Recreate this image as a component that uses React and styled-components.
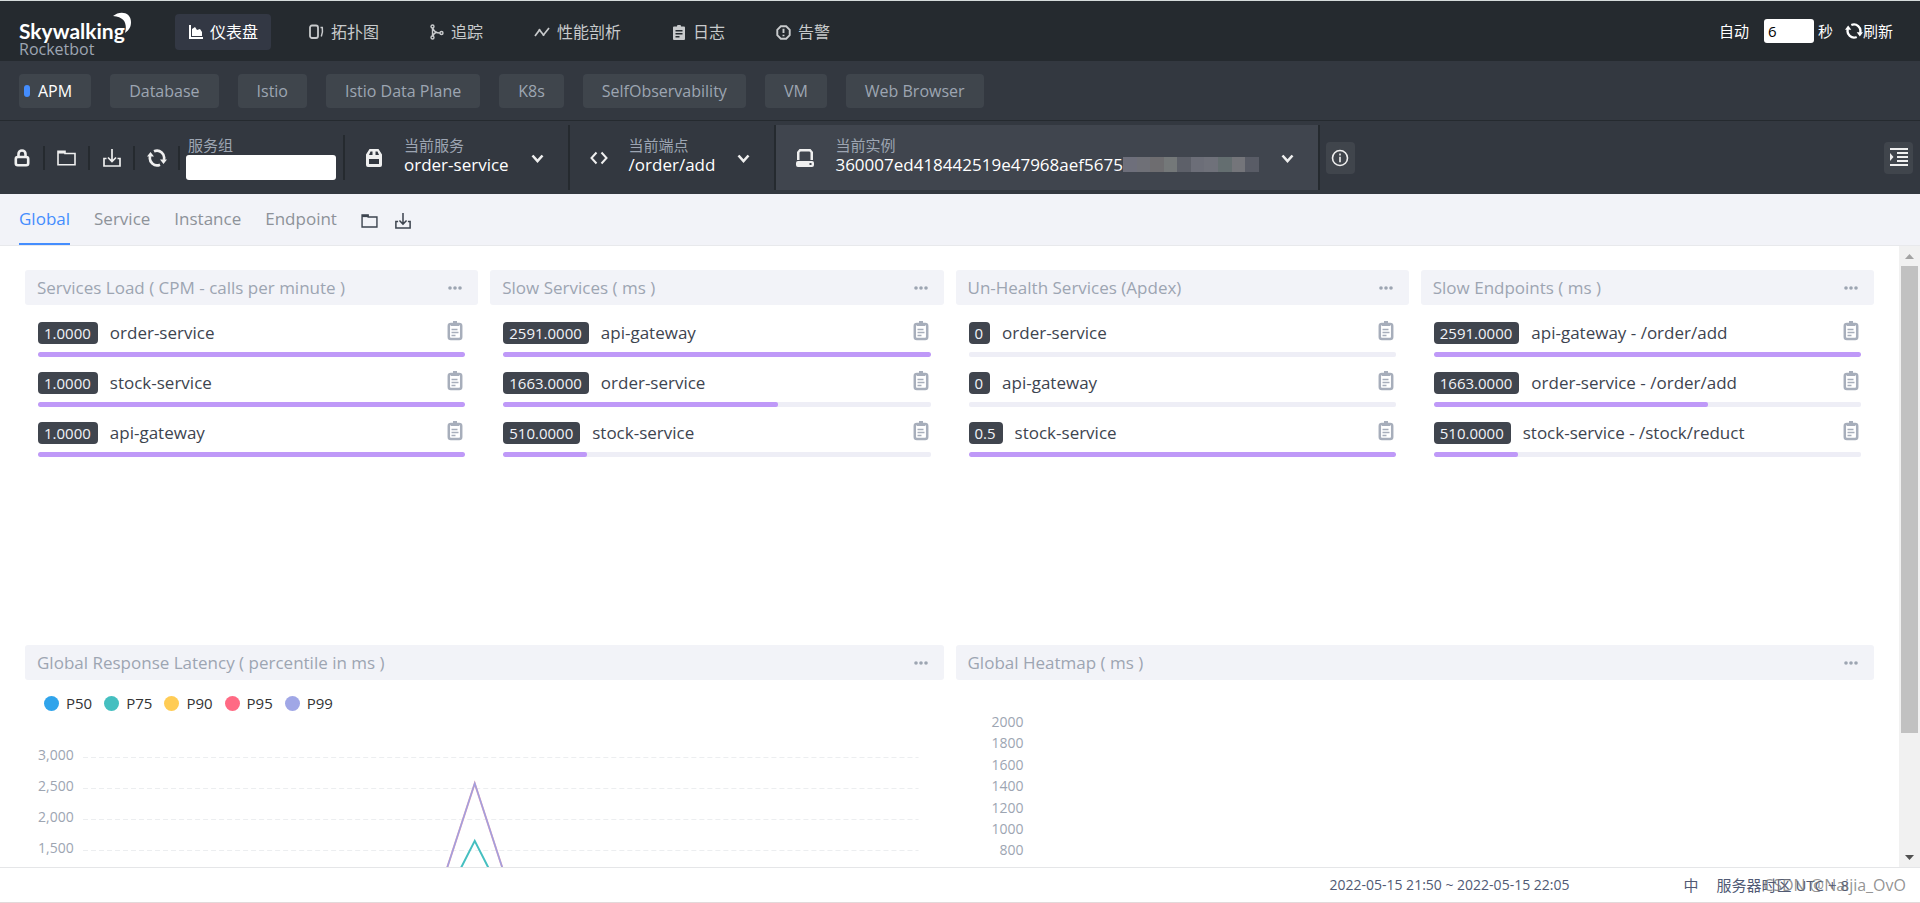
import React, { useState } from 'react';
import styled, { createGlobalStyle, css } from 'styled-components';

const GlobalStyle = createGlobalStyle`
  *, *::before, *::after {
    box-sizing: border-box;
  }

  body {
    margin: 0;
    background: #fff;
    color: #3d444f;
    font-family: 'Open Sans', 'Noto Sans CJK SC', sans-serif;
    font-size: 15px;
    line-height: 20px;
  }

  button, input {
    font: inherit;
    color: inherit;
  }

  button {
    padding: 0;
    border: 0;
    background: none;
    cursor: pointer;
  }

  a {
    color: inherit;
    text-decoration: none;
  }

  svg {
    display: block;
    flex: none;
  }
`;

const Page = styled.div`
  display: flex;
  flex-direction: column;
  height: 100vh;
  border-top: 1px solid #d5dbdb;
`;

/* header */

const Header = styled.header`
  display: flex;
  align-items: center;
  flex: none;
  height: 60px;
  padding: 0 27px 0 19px;
  background: #252a2f;
  color: #fff;
`;

const Brand = styled.a`
  position: relative;
  width: 156px;
  margin-top: 12px;
`;

const BrandName = styled.span`
  display: block;
  font-family: Lato, sans-serif;
  font-weight: 700;
  font-size: 21px;
  line-height: 24px;
`;

const BrandMoon = styled.svg`
  position: absolute;
  left: 94px;
  top: -7px;
`;

const BrandSub = styled.span`
  display: block;
  color: #9da5b2;
  font-size: 16px;
  line-height: 12px;
`;

const Nav = styled.nav`
  display: flex;
  gap: 24px;
  margin-top: 2px;
`;

const NavItem = styled.a`
  display: flex;
  align-items: center;
  gap: 7px;
  height: 36px;
  padding: 0 13px 0 14px;
  border-radius: 4px;
  font-size: 16px;
  color: ${({ $active }) => ($active ? '#fff' : '#c8cacc')};
  background: ${({ $active }) => ($active ? '#333844' : 'transparent')};
`;

const Reload = styled.div`
  display: flex;
  align-items: center;
  margin-left: auto;
`;

const ReloadInput = styled.input`
  width: 50px;
  height: 24px;
  margin: 0 4px 0 15px;
  padding: 0 4px;
  border: 0;
  border-radius: 3px;
  background: #fff;
  color: #000;
`;

const ReloadButton = styled.button`
  display: flex;
  align-items: center;
  margin-left: 12px;
`;

/* dashboard groups */

const Groups = styled.nav`
  display: flex;
  align-items: center;
  gap: 19px;
  flex: none;
  height: 60px;
  padding: 0 19px;
  background: #333840;
  border-bottom: 1px solid #252a2f;
`;

const Group = styled.a`
  position: relative;
  height: 34px;
  padding: 0 19px;
  border-radius: 4px;
  font-size: 16px;
  line-height: 34px;
  background: #3f454c;
  color: ${({ $active }) => ($active ? '#fff' : '#9da5b2')};

  ${({ $active }) =>
    $active &&
    css`
      &::before {
        content: '';
        position: absolute;
        left: 5px;
        top: 11px;
        width: 6px;
        height: 12px;
        border-radius: 3px;
        background: #448dfe;
      }
    `}
`;

/* selectors */

const Toolbar = styled.div`
  display: flex;
  align-items: center;
  flex: none;
  height: 73px;
  padding-right: 7px;
  background: #333840;
  color: #efefef;
`;

const Tool = styled.button`
  display: flex;
  align-items: center;
  justify-content: center;
  width: 45px;
  height: 24px;
  border-right: 2px solid #252a2f;
`;

const GroupFilter = styled.label`
  display: flex;
  flex-direction: column;
  padding: 0 7px 0 6px;
  color: #9da5b2;
  border-right: 2px solid #252a2f;
`;

const GroupName = styled.span`
  padding-left: 2px;
`;

const GroupInput = styled.input`
  width: 150px;
  height: 25px;
  padding: 0 6px;
  border: 0;
  border-radius: 3px;
  background: #fff;
  color: #000;
`;

const Selector = styled.button`
  display: flex;
  align-items: center;
  height: 65px;
  padding: 0 24px 0 20px;
  text-align: left;
  border-right: 2px solid #252a2f;
  background: ${({ $active }) => ($active ? '#40454e' : 'transparent')};
`;

const SelectorText = styled.span`
  padding: 0 22px 6px 21px;
`;

const SelectorLabel = styled.span`
  display: block;
  color: #9da5b2;
`;

const SelectorValue = styled.span`
  display: flex;
  align-items: center;
  font-size: 17px;
  color: #fff;
`;

const Mosaic = styled.span`
  display: flex;
  width: 136px;
`;

const MosaicCell = styled.span`
  flex: 1;
  height: 15px;
  background: ${({ $color }) => $color};
`;

const SquareButton = styled.button`
  display: flex;
  align-items: center;
  justify-content: center;
  width: 29px;
  height: 32px;
  margin-left: ${({ $end }) => ($end ? 'auto' : '6px')};
  border-radius: 4px;
  background: #40454c;
`;

/* tabs */

const Tabs = styled.nav`
  display: flex;
  gap: 24px;
  flex: none;
  height: 52px;
  padding: 0 19px;
  background: #f2f3f8;
  border-bottom: 1px solid #e8e9ec;
`;

const Tab = styled.a`
  height: 51px;
  font-size: 17px;
  line-height: 50px;
  color: ${({ $active }) => ($active ? '#448dfe' : '#8d9299')};
  border-bottom: 2px solid ${({ $active }) => ($active ? '#448dfe' : 'transparent')};
`;

const TabTools = styled.div`
  display: flex;
  align-items: center;
  gap: 17px;
  padding-top: 3px;
  color: #3d444f;
`;

/* content */

const Main = styled.main`
  display: flex;
  flex: 1;
  min-height: 0;
`;

const Board = styled.div`
  display: grid;
  grid-template-columns: repeat(4, 1fr);
  grid-auto-rows: 363px;
  gap: 12px;
  flex: 1;
  padding: 24px 25px;
  overflow: hidden;
`;

const Panel = styled.section`
  grid-column: span ${({ $span }) => $span || 1};
  min-width: 0;
`;

const PanelHead = styled.div`
  display: flex;
  align-items: center;
  justify-content: space-between;
  height: 35px;
  padding: 0 16px 0 12px;
  border-radius: 3px;
  background: #f2f3f8;
  color: #9da5b2;
`;

const PanelTitle = styled.h2`
  margin: 0;
  font-size: 17px;
  font-weight: 400;
`;

const List = styled.ul`
  display: flex;
  flex-direction: column;
  gap: 15px;
  margin: 0;
  padding: 17px 13px;
  list-style: none;
`;

const ListRow = styled.li`
  display: flex;
  flex-direction: column;
  gap: 8px;
`;

const RowText = styled.div`
  display: flex;
  align-items: center;
  gap: 12px;
  height: 22px;
  font-size: 17px;
`;

const Badge = styled.span`
  padding: 0 7px 0 6px;
  border-radius: 4px;
  font-size: 15px;
  line-height: 22px;
  background: #40454e;
  color: #f2f3f8;
`;

const CopyButton = styled.button`
  margin-left: auto;
  padding: 0 2px 4px 0;
  color: #a7aebb;
`;

const Track = styled.div`
  height: 5px;
  border-radius: 2px;
  background: #eeeef6;
  overflow: hidden;
`;

const Fill = styled.div`
  height: 5px;
  border-radius: 2px;
  background: #bf99f8;
`;

const Legend = styled.div`
  display: flex;
  gap: 12px;
  padding: 13px 19px 0;
  color: #333;
`;

const LegendItem = styled.span`
  display: flex;
  align-items: center;
  gap: 7px;

  &::before {
    content: '';
    width: 15px;
    height: 15px;
    border-radius: 50%;
    background: ${({ $color }) => $color};
  }
`;

const Chart = styled.div`
  display: flex;
  gap: 8px;
  padding: 26px 25px 0 13px;
`;

const Axis = styled.div`
  width: 37px;
  font-size: 14px;
  line-height: 31px;
  color: #9da5b2;
`;

const Plot = styled.svg`
  flex: 1;
  min-width: 0;
  height: 200px;
  margin-top: 5px;
`;

const HeatAxis = styled.div`
  display: flex;
  flex-direction: column;
  justify-content: space-between;
  width: 68px;
  height: 234px;
  margin-top: 32px;
  font-size: 14px;
  text-align: right;
  color: #9da5b2;
`;

const ScrollRail = styled.div`
  display: flex;
  flex-direction: column;
  align-items: center;
  justify-content: space-between;
  width: 21px;
  padding: 0 2px;
  background: #f1f1f1;
`;

const ScrollThumb = styled.div`
  width: 17px;
  height: 467px;
  margin-bottom: auto;
  background: #c1c1c1;
`;

const ScrollArrow = styled.span`
  display: flex;
  align-items: center;
  justify-content: center;
  height: 20px;
  color: ${({ $dim }) => ($dim ? '#a3a3a3' : '#505050')};
`;

/* footer */

const Footer = styled.footer`
  position: relative;
  display: flex;
  align-items: center;
  flex: none;
  height: 36px;
  padding: 0 71px 0 19px;
  border-top: 1px solid #e5e6e8;
  border-bottom: 1px solid #e3d9da;
  color: #515a74;
`;

const TimeRange = styled.button`
  margin-left: auto;
  font-size: 14px;
`;

const Lang = styled.button`
  margin: 0 18px 0 114px;
`;

const Watermark = styled.span`
  position: absolute;
  right: 14px;
  top: 7px;
  color: rgba(120, 120, 120, 0.8);
  font-size: 16px;
`;

/* icons */

const ChartIcon = () => (
  <svg width="14" height="14" viewBox="0 0 14 14" fill="currentColor">
    <path d="M0 0h2v12h12v2H0z" />
    <path d="M3 11V4l3-2 2 3 3-1 2 3v4z" />
  </svg>
);

const TopologyIcon = () => (
  <svg width="15" height="16" viewBox="0 0 15 16" fill="none" stroke="currentColor" strokeWidth="1.8">
    <rect x="1" y="1.5" width="8" height="12.5" rx="2" />
    <path d="M11.500 3.500h1.800c.5 3 .2 6-1 9" strokeWidth="1.500" />
  </svg>
);

const TraceIcon = () => (
  <svg width="14" height="16" viewBox="0 0 14 16" fill="none" stroke="currentColor" strokeWidth="1.400">
    <circle cx="2.500" cy="2.500" r="1.500" />
    <circle cx="2.500" cy="13.500" r="1.500" />
    <circle cx="11.500" cy="9" r="1.500" />
    <path d="M2.500 4v8M3 4.500c1 3 3 4.500 7 4.500M3 12c.5-2 2-3.500 4-3.700" />
  </svg>
);

const ProfileIcon = () => (
  <svg width="16" height="12" viewBox="0 0 16 12" fill="none" stroke="currentColor" strokeWidth="1.700">
    <path d="M1 10l4.500-6 4 5L15 2" />
    <circle cx="5.500" cy="4" r="1" fill="currentColor" stroke="none" />
    <circle cx="9.500" cy="9" r="1" fill="currentColor" stroke="none" />
  </svg>
);

const LogIcon = () => (
  <svg width="14" height="15" viewBox="0 0 14 15" fill="currentColor" fillRule="evenodd">
    <path d="M2 1.500h3a2 2 0 0 1 4 0h3a1 1 0 0 1 1 1V14a1 1 0 0 1-1 1H2a1 1 0 0 1-1-1V2.500a1 1 0 0 1 1-1zM3.500 5v1.500h7V5zm0 3v1.500h7V8zm0 3v1.500h4V11z" />
  </svg>
);

const AlarmIcon = () => (
  <svg width="15" height="15" viewBox="0 0 14 14" fill="none" stroke="currentColor" strokeWidth="1.800">
    <path d="M4.500 1.200h5l3.300 3.300v5l-3.300 3.300h-5L1.200 9.500v-5z" />
    <path d="M7 3.500v4M7 9v1.600" />
  </svg>
);

const RefreshIcon = ({ size = 20 }) => (
  <svg width={size} height={size} viewBox="0 0 20 20" fill="none" stroke="currentColor" strokeWidth="2.600">
    <path d="M7 3.300A7.200 7.200 0 0 1 16.800 12M13 16.700A7.200 7.200 0 0 1 3.200 8" />
    <path d="M13 11.500h7L16.500 16zM0 8.500h7L3.500 4z" fill="currentColor" stroke="none" />
  </svg>
);

const LockIcon = () => (
  <svg width="16" height="18" viewBox="0 0 16 18" fill="none" stroke="currentColor" strokeWidth="2.600">
    <rect x="1.800" y="8" width="12.400" height="8.200" rx="2" />
    <path d="M4.500 8V5a3.500 3.500 0 0 1 7 0v3" />
  </svg>
);

const FolderIcon = ({ width = 19, height = 16 }) => (
  <svg width={width} height={height} viewBox="0 0 19 16" fill="none" stroke="currentColor" strokeWidth="1.600">
    <path d="M1 14.800V1.200h7v2.300h10v11.300z" />
    <path d="M1 2.300h7" strokeWidth="2.500" />
  </svg>
);

const DownloadIcon = ({ size = 18 }) => (
  <svg width={size} height={size} viewBox="0 0 18 18" fill="none" stroke="currentColor" strokeWidth="1.700">
    <path d="M3.500 9.500H1V17h16V9.500h-2.500" />
    <path d="M9 0v12M5 8.500l4 4 4-4" />
  </svg>
);

const ServiceIcon = () => (
  <svg width="18" height="18" viewBox="0 0 18 18" fill="currentColor" fillRule="evenodd">
    <path d="M4.500 0h9L17 5.500V16a2 2 0 0 1-2 2H3a2 2 0 0 1-2-2V5.500zM5.500 2.500L4 6h3.500V2.500zm5 0V6H14l-1.500-3.500zM4 10v5h10v-5z" />
  </svg>
);

const CodeIcon = () => (
  <svg width="18" height="14" viewBox="0 0 18 14" fill="none" stroke="currentColor" strokeWidth="2">
    <path d="M6.500 1.500L1.500 7l5 5.500M11.500 1.500l5 5.500-5 5.500" />
  </svg>
);

const DiskIcon = () => (
  <svg width="18" height="18" viewBox="0 0 18 18" fill="currentColor" fillRule="evenodd">
    <path d="M3.500 0h11L17 3v8h-2.500V3.500l-1-1h-9l-1 1V11H1V3z" />
    <path d="M2 12h14a2 2 0 0 1 2 2v2a2 2 0 0 1-2 2H2a2 2 0 0 1-2-2v-2a2 2 0 0 1 2-2zm11.500 2v2h2v-2z" />
  </svg>
);

const ChevronIcon = () => (
  <svg width="13" height="13" viewBox="0 0 13 13" fill="none" stroke="currentColor" strokeWidth="2.600">
    <path d="M1.500 4.500l5 5.500 5-5.500" />
  </svg>
);

const InfoIcon = () => (
  <svg width="18" height="18" viewBox="0 0 18 18" fill="none" stroke="currentColor" strokeWidth="1.600">
    <circle cx="9" cy="9" r="7.500" />
    <path d="M9 4.500v2M9 7.700v5.500" />
  </svg>
);

const IndentIcon = () => (
  <svg width="18" height="19" viewBox="0 0 18 19" fill="currentColor">
    <path d="M0 0h18v2H0zM7 4h11v2H7zM7 8h11v2H7zM7 12h11v2H7zM0 16h18v2H0zM0 5l3.500 4L0 13z" />
  </svg>
);

const DotsIcon = () => (
  <svg width="14" height="4" viewBox="0 0 14 4" fill="currentColor">
    <circle cx="2" cy="2" r="1.800" />
    <circle cx="7" cy="2" r="1.800" />
    <circle cx="12" cy="2" r="1.800" />
  </svg>
);

const CopyIcon = () => (
  <svg width="16" height="20" viewBox="0 0 16 20" fill="none" stroke="currentColor" strokeWidth="2.500">
    <rect x="1.800" y="3" width="12.400" height="15" rx="2" />
    <path d="M4 3.500h8M6 1.500h4" strokeWidth="3" />
    <path d="M4.500 8.500h6M4.500 11.500h7M4.500 14.500h4" strokeWidth="1.300" />
  </svg>
);

/* data */

const navItems = [
  { label: '仪表盘', icon: <ChartIcon /> },
  { label: '拓扑图', icon: <TopologyIcon /> },
  { label: '追踪', icon: <TraceIcon /> },
  { label: '性能剖析', icon: <ProfileIcon /> },
  { label: '日志', icon: <LogIcon /> },
  { label: '告警', icon: <AlarmIcon /> },
];

const groups = ['APM', 'Database', 'Istio', 'Istio Data Plane', 'K8s', 'SelfObservability', 'VM', 'Web Browser'];

const tabs = ['Global', 'Service', 'Instance', 'Endpoint'];

const lists = [
  {
    title: 'Services Load ( CPM - calls per minute )',
    rows: [
      { value: '1.0000', name: 'order-service', percent: 100 },
      { value: '1.0000', name: 'stock-service', percent: 100 },
      { value: '1.0000', name: 'api-gateway', percent: 100 },
    ],
  },
  {
    title: 'Slow Services ( ms )',
    rows: [
      { value: '2591.0000', name: 'api-gateway', percent: 100 },
      { value: '1663.0000', name: 'order-service', percent: 64.2 },
      { value: '510.0000', name: 'stock-service', percent: 19.7 },
    ],
  },
  {
    title: 'Un-Health Services (Apdex)',
    rows: [
      { value: '0', name: 'order-service', percent: 0 },
      { value: '0', name: 'api-gateway', percent: 0 },
      { value: '0.5', name: 'stock-service', percent: 100 },
    ],
  },
  {
    title: 'Slow Endpoints ( ms )',
    rows: [
      { value: '2591.0000', name: 'api-gateway - /order/add', percent: 100 },
      { value: '1663.0000', name: 'order-service - /order/add', percent: 64.2 },
      { value: '510.0000', name: 'stock-service - /stock/reduct', percent: 19.7 },
    ],
  },
];

const percentiles = [
  { name: 'P50', color: '#30a4eb' },
  { name: 'P75', color: '#45bfc0' },
  { name: 'P90', color: '#ffcc55' },
  { name: 'P95', color: '#ff6a84' },
  { name: 'P99', color: '#a0a7e6' },
];

const latencyTicks = ['3,000', '2,500', '2,000', '1,500', '1,000', '500'];
const heatTicks = [2000, 1800, 1600, 1400, 1200, 1000, 800, 600, 400, 200, 0];

const mosaicColors = ['#6e6f7b', '#6f7077', '#6e6d70', '#747879', '#5d6069', '#6c6e78', '#6f717a', '#646e70', '#74757a', '#595c66'];

function PanelHeader({ title }) {
  return (
    <PanelHead>
      <PanelTitle>{title}</PanelTitle>
      <button type="button" aria-label="More">
        <DotsIcon />
      </button>
    </PanelHead>
  );
}

function TopList({ title, rows }) {
  return (
    <Panel>
      <PanelHeader title={title} />
      <List>
        {rows.map((row) => (
          <ListRow key={row.name}>
            <RowText>
              <Badge>{row.value}</Badge>
              <span>{row.name}</span>
              <CopyButton type="button" aria-label="Copy">
                <CopyIcon />
              </CopyButton>
            </RowText>
            <Track>
              <Fill style={{ width: `${row.percent}%` }} />
            </Track>
          </ListRow>
        ))}
      </List>
    </Panel>
  );
}

// 31 units for every 500 ms, the 3,000 line is at the top
function LatencyChart() {
  const peak = (value) => `M0 187H339L391.500 ${187 - (value * 31) / 500}L444 187H835`;

  return (
    <Chart>
      <Axis>
        {latencyTicks.map((tick) => (
          <div key={tick}>{tick}</div>
        ))}
      </Axis>
      <Plot viewBox="0 -13 835 200" preserveAspectRatio="none" fill="none">
        {latencyTicks.map((tick, index) => (
          <path key={tick} d={`M0 ${index * 31 + 0.5}H835`} stroke="#eceef0" strokeDasharray="5 3" />
        ))}
        <path d={peak(1663)} stroke="#45bfc0" strokeWidth="2" />
        <path d={peak(2591)} stroke="#e7a0b4" strokeWidth="2" />
        <path d={peak(2591)} stroke="#a0a0e0" strokeWidth="1.500" />
      </Plot>
    </Chart>
  );
}

function EntitySelector({ icon, label, active, children }) {
  return (
    <Selector type="button" $active={active}>
      {icon}
      <SelectorText>
        <SelectorLabel>{label}</SelectorLabel>
        <SelectorValue>{children}</SelectorValue>
      </SelectorText>
      <ChevronIcon />
    </Selector>
  );
}

function App() {
  const [seconds, setSeconds] = useState('6');
  const [serviceGroup, setServiceGroup] = useState('');

  return (
    <>
      <GlobalStyle />
      <Page>
        <Header>
          <Brand href="#">
            <BrandName>Skywalking</BrandName>
            <BrandMoon width="20" height="22" viewBox="0 0 20 22" fill="#fff">
              <path d="M0 4C7-2 18 0 18 10c0 5-2 8-6 11 2-8 1-16-12-17z" />
            </BrandMoon>
            <BrandSub>Rocketbot</BrandSub>
          </Brand>
          <Nav>
            {navItems.map((item, index) => (
              <NavItem key={item.label} href="#" $active={index === 0}>
                {item.icon}
                {item.label}
              </NavItem>
            ))}
          </Nav>
          <Reload>
            <label htmlFor="seconds">自动</label>
            <ReloadInput id="seconds" value={seconds} onChange={(e) => setSeconds(e.target.value)} />
            秒
            <ReloadButton type="button">
              <RefreshIcon size={18} />
              刷新
            </ReloadButton>
          </Reload>
        </Header>

        <Groups>
          {groups.map((name, index) => (
            <Group key={name} href="#" $active={index === 0}>
              {name}
            </Group>
          ))}
        </Groups>

        <Toolbar>
          <Tool type="button" aria-label="Lock">
            <LockIcon />
          </Tool>
          <Tool type="button" aria-label="Import">
            <FolderIcon />
          </Tool>
          <Tool type="button" aria-label="Export">
            <DownloadIcon />
          </Tool>
          <Tool type="button" aria-label="Refresh">
            <RefreshIcon />
          </Tool>
          <GroupFilter>
            <GroupName>服务组</GroupName>
            <GroupInput value={serviceGroup} onChange={(e) => setServiceGroup(e.target.value)} />
          </GroupFilter>
          <EntitySelector icon={<ServiceIcon />} label="当前服务">
            order-service
          </EntitySelector>
          <EntitySelector icon={<CodeIcon />} label="当前端点">
            /order/add
          </EntitySelector>
          <EntitySelector icon={<DiskIcon />} label="当前实例" active>
            360007ed418442519e47968aef5675
            <Mosaic>
              {mosaicColors.map((color) => (
                <MosaicCell key={color} $color={color} />
              ))}
            </Mosaic>
          </EntitySelector>
          <SquareButton type="button" aria-label="Info">
            <InfoIcon />
          </SquareButton>
          <SquareButton type="button" aria-label="Events" $end>
            <IndentIcon />
          </SquareButton>
        </Toolbar>

        <Tabs>
          {tabs.map((name, index) => (
            <Tab key={name} href="#" $active={index === 0}>
              {name}
            </Tab>
          ))}
          <TabTools>
            <button type="button" aria-label="Import tabs">
              <FolderIcon width={17} height={14} />
            </button>
            <button type="button" aria-label="Export tabs">
              <DownloadIcon size={16} />
            </button>
          </TabTools>
        </Tabs>

        <Main>
          <Board>
            {lists.map((list) => (
              <TopList key={list.title} title={list.title} rows={list.rows} />
            ))}
            <Panel $span={2}>
              <PanelHeader title="Global Response Latency ( percentile in ms )" />
              <Legend>
                {percentiles.map((item) => (
                  <LegendItem key={item.name} $color={item.color}>
                    {item.name}
                  </LegendItem>
                ))}
              </Legend>
              <LatencyChart />
            </Panel>
            <Panel $span={2}>
              <PanelHeader title="Global Heatmap ( ms )" />
              <HeatAxis>
                {heatTicks.map((tick) => (
                  <span key={tick}>{tick}</span>
                ))}
              </HeatAxis>
            </Panel>
          </Board>
          <ScrollRail>
            <ScrollArrow $dim>
              <svg width="9" height="5" viewBox="0 0 9 5" fill="currentColor">
                <path d="M0 5l4.500-5L9 5z" />
              </svg>
            </ScrollArrow>
            <ScrollThumb />
            <ScrollArrow>
              <svg width="9" height="5" viewBox="0 0 9 5" fill="currentColor">
                <path d="M0 0h9L4.500 5z" />
              </svg>
            </ScrollArrow>
          </ScrollRail>
        </Main>

        <Footer>
          <TimeRange type="button">2022-05-15 21:50 ~ 2022-05-15 22:05</TimeRange>
          <Lang type="button">中</Lang>
          <span>服务器时区 UTC + 8</span>
          <Watermark>CSDN @Naijia_OvO</Watermark>
        </Footer>
      </Page>
    </>
  );
}

export default App;
